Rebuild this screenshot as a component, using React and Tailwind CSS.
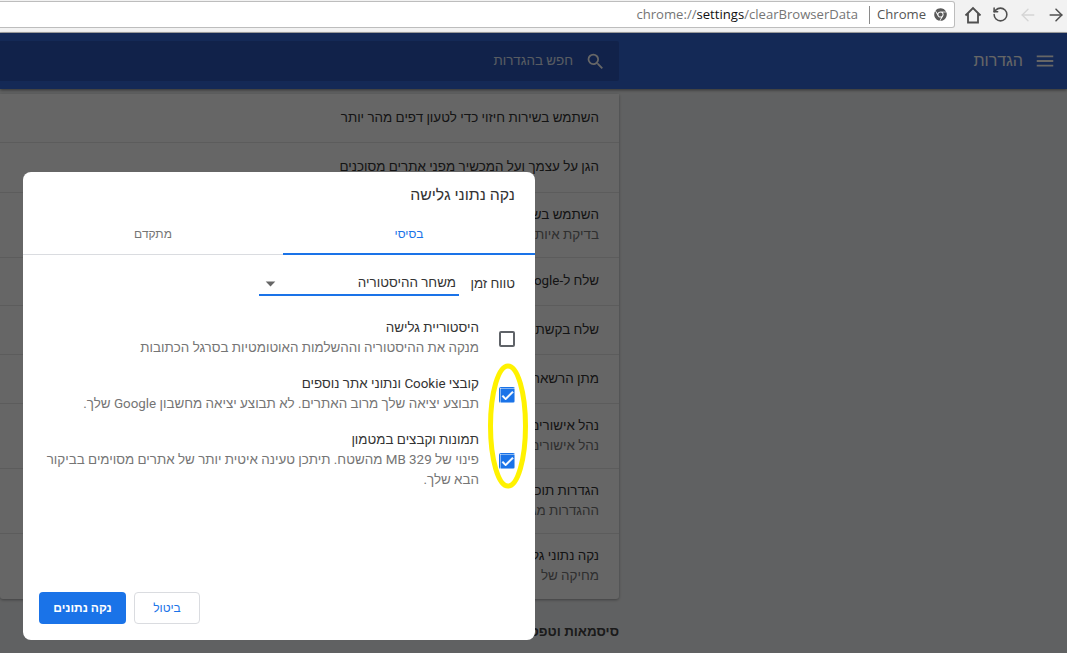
import React from "react";
import { MdMenu, MdSearch, MdArrowDropDown, MdCheck } from "react-icons/md";
import { FaChrome } from "react-icons/fa";
import { ArrowLeft, ArrowRight, RotateCcw } from "lucide-react";

const rows = [
  { title: "השתמש בשירות חיזוי כדי לטעון דפים מהר יותר", h: "h-[49px]" },
  { title: "הגן על עצמך ועל המכשיר מפני אתרים מסוכנים", h: "h-[50px]" },
  { title: "השתמש בשירות", sub: "בדיקת איות", h: "h-[65px]" },
  { title: "שלח ל-Google", h: "h-[48px]" },
  { title: "שלח בקשת", h: "h-[49px]" },
  { title: "מתן הרשאה", h: "h-[49px]" },
  { title: "נהל אישורים", sub: "נהל אישורים", h: "h-[65px]" },
  { title: "הגדרות תוכן", sub: "ההגדרות מגדירות", h: "h-[65px]" },
  { title: "נקה נתוני גלישה", sub: "מחיקה של", h: "h-[65px]" },
];

const options = [
  {
    id: 0,
    title: "היסטוריית גלישה",
    lines: "מנקה את ההיסטוריה וההשלמות האוטומטיות בסרגל הכתובות",
    checked: false,
  },
  {
    id: 1,
    title: "קובצי Cookie ונתוני אתר נוספים",
    lines: "תבוצע יציאה שלך מרוב האתרים. לא תבוצע יציאה מחשבון Google שלך.",
    checked: true,
  },
  {
    id: 2,
    title: "תמונות וקבצים במטמון",
    lines: "פינוי של 329 MB מהשטח. תיתכן טעינה איטית יותר של אתרים מסוימים בביקור הבא שלך.",
    checked: true,
  },
];

function BrowserBar() {
  return (
    <div className="flex h-[33px] shrink-0 border-b border-[#a9a9a9] bg-[#f2f2f2]">
      <div className="mt-[1px] flex h-[27px] w-[955px] items-center justify-end rounded-r-[3px] border border-l-0 border-[#bdbdbd] bg-white pr-[7px] font-['Open_Sans'] text-[13.1px] text-[#757575]">
        <span>
          chrome://<span className="text-[#111]">settings</span>/clearBrowserData
        </span>
        <span className="ml-[11px] h-[18px] w-px bg-[#8a8a8a]" />
        <span className="ml-[7px] text-[#555]">Chrome</span>
        <FaChrome className="ml-[8px] text-[13px] text-[#5a5a5a]" />
      </div>
      <div className="flex flex-1 items-start pt-[6px] pl-[9px] text-[#4f4f4f]">
        <svg width="18" height="18" viewBox="0 0 18 18" fill="none" stroke="currentColor" strokeWidth="1.8">
          <path d="M1.500 9.500 9 2l7.500 7.500M4 7.500V16.500H14V7.500" />
        </svg>
        <RotateCcw size={17} strokeWidth={2.2} className="ml-[10px]" />
        <ArrowLeft size={20} strokeWidth={1.6} className="ml-[9px] -mt-[1px] text-[#d5d5d5]" />
        <ArrowRight size={20} strokeWidth={1.8} className="ml-[8px] -mt-[1px]" />
      </div>
    </div>
  );
}

function SettingsPage() {
  return (
    <div className="flex min-h-0 flex-1 flex-col bg-[#f1f3f4]">
      <div className="flex h-[56px] shrink-0 items-center bg-[#3367d6] shadow-[0_1px_3px_rgba(0,0,0,0.5)]">
        <div className="flex h-[40px] w-[619px] items-center justify-end rounded-r-[2px] bg-[#2b55b9] pr-[13px] text-white">
          <span className="text-[13.4px] text-[#dfe6f5]">חפש בהגדרות</span>
          <MdSearch className="ml-[12px] text-[21px]" />
        </div>
        <div className="flex flex-1 items-center justify-end pr-[11px] text-white">
          <span className="text-[16px]">הגדרות</span>
          <MdMenu className="ml-[11px] text-[22px]" />
        </div>
      </div>
      <div className="ml-0 w-[619px] pt-[5px]" dir="rtl">
        <div className="rounded-b-[3px] bg-white shadow-[0_1px_3px_rgba(0,0,0,0.35)]">
          {rows.map((row) => (
            <div
              key={row.title}
              className={`${row.h} flex flex-col justify-center whitespace-nowrap border-b border-[#e5e5e5] px-[20px] pb-[1px] text-[13.4px] leading-[20px] text-[#333] last:border-b-0`}
            >
              <div>{row.title}</div>
              {row.sub && <div className="text-[#757575]">{row.sub}</div>}
            </div>
          ))}
        </div>
        <div className="mt-[23px] text-[13.4px] font-bold text-[#444]">סיסמאות וטפסים</div>
      </div>
    </div>
  );
}

function Dialog() {
  return (
    <div
      dir="rtl"
      className="absolute left-[23px] top-[172px] flex h-[468px] w-[512px] flex-col rounded-[8px] bg-white text-[13.4px] text-[#333]"
    >
      <div className="h-[41px] pt-[12px] pr-[20px] text-[15.8px] leading-[22px]">נקה נתוני גלישה</div>
      <div className="flex h-[42px] border-b border-[#dadce0]">
        <div className="flex w-[252px] items-center justify-center border-b-2 border-[#1a73e8] -mb-px pt-[2px] text-[12px] text-[#1a73e8]">
          בסיסי
        </div>
        <div className="flex flex-1 items-center justify-center text-[12px] text-[#757575]">מתקדם</div>
      </div>
      <div className="mt-[19px] flex items-start pr-[20px]">
        <span className="w-[56px] leading-[20px]">טווח זמן</span>
        <div className="flex h-[22px] w-[200px] items-center justify-between border-b-2 border-[#1a73e8] pb-[2px]">
          <span className="pr-[3px]">משחר ההיסטוריה</span>
          <MdArrowDropDown className="ml-0 text-[23px] text-[#666]" />
        </div>
      </div>
      <div className="mt-[22px] flex flex-col gap-[16px] pr-[20px] pl-[10px]">
        {options.map((option) => (
          <div key={option.id} className="flex items-center">
            <div
              className={`${option.checked ? "bg-[#1a73e8]" : "border-2 border-[#5f6368] bg-white"} mt-[2px] flex size-[16px] shrink-0 items-center justify-center rounded-[2px]`}
            >
              {option.checked && <MdCheck className="shrink-0 text-[15px] text-white" stroke="currentColor" strokeWidth={1.5} />}
            </div>
            <div className="mr-[20px] leading-[20px]">
              <div>{option.title}</div>
              <div className="text-[#757575]">{option.lines}</div>
            </div>
          </div>
        ))}
      </div>
      <div className="mt-auto flex justify-start gap-[8px] pr-[335px] pb-[16px]">
        <button className="h-[32px] w-[66px] rounded-[4px] border border-[#dadce0] bg-white text-[12px] text-[#1a73e8]">
          ביטול
        </button>
        <button className="h-[32px] w-[87px] rounded-[4px] bg-[#1a73e8] text-[12px] font-bold text-white">
          נקה נתונים
        </button>
      </div>
    </div>
  );
}

export default function App() {
  return (
    <div className="relative flex h-[653px] w-[1067px] flex-col overflow-hidden font-['Roboto','Liberation_Sans',sans-serif]">
      <BrowserBar />
      <div className="relative flex min-h-0 flex-1 flex-col">
        <SettingsPage />
        <div className="absolute inset-0 bg-black/60" />
      </div>
      <Dialog />
      {/* yellow marker drawn over the checkboxes */}
      <svg className="absolute left-[487px] top-[362px]" width="42" height="128" viewBox="0 0 42 128" fill="none">
        <ellipse cx="21" cy="64" rx="17.500" ry="60" stroke="#fff200" strokeWidth="5" />
      </svg>
    </div>
  );
}
